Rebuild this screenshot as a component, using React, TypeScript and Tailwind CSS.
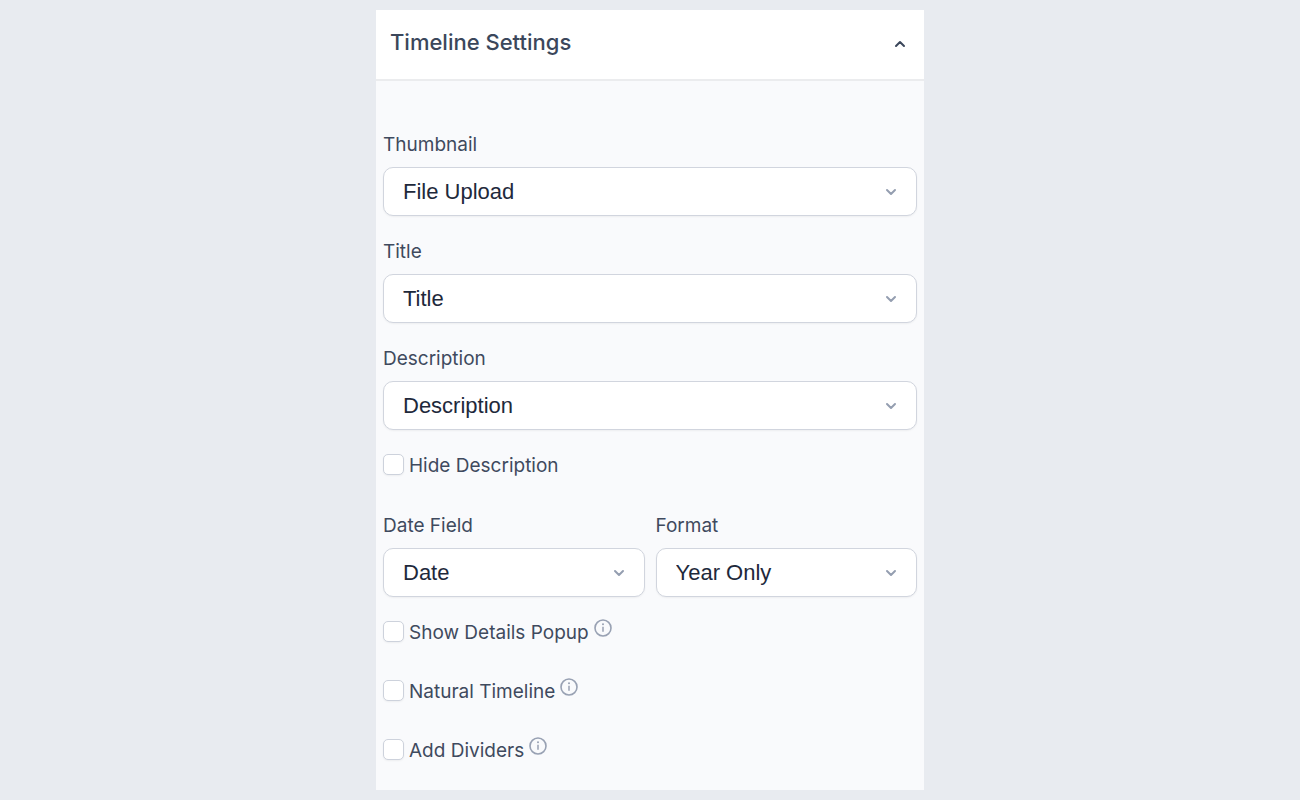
import { useState } from 'react';
import { ChevronDown, ChevronUp } from 'lucide-react';

type SelectFieldProps = {
  id: string;
  label: string;
  options: string[];
};

function SelectField({ id, label, options }: SelectFieldProps) {
  return (
    <div className="flex-1">
      <label htmlFor={id} className="block text-[19px] leading-7 mb-2">
        {label}
      </label>
      <div className="relative">
        <select
          id={id}
          className="block w-full h-[49px] appearance-none rounded-[10px] border border-[#d1d5de] bg-white pl-[19px] pr-12 font-['Liberation_Sans',Arial,sans-serif] text-[22px] text-[#1e293b] shadow-xs"
        >
          {options.map((option) => (
            <option key={option}>{option}</option>
          ))}
        </select>
        <ChevronDown
          className="pointer-events-none absolute right-[18px] top-[17px] h-4 w-4 text-[#949eb0]"
          strokeWidth={3}
        />
      </div>
    </div>
  );
}

function InfoIcon() {
  return (
    <svg viewBox="0 0 18 18" className="ml-[5px] h-[18px] w-[18px] text-[#98a1b3]" fill="none" stroke="currentColor">
      <circle cx="9" cy="9" r="8" strokeWidth="1.6" />
      <path d="M9 7.8v5" strokeWidth="1.5" />
      <circle cx="9" cy="5.3" r="1" fill="currentColor" stroke="none" />
    </svg>
  );
}

type CheckFieldProps = {
  id: string;
  label: string;
  info?: boolean;
};

function CheckField({ id, label, info }: CheckFieldProps) {
  return (
    <div className="flex h-7 items-start">
      <input
        id={id}
        type="checkbox"
        className="mt-[2px] mr-[5px] h-[21px] w-[21px] appearance-none rounded-[5px] border border-[#cdd2dc] bg-white shadow-xs checked:bg-blue-600"
      />
      <label htmlFor={id} className="text-[19px] leading-7">
        {label}
      </label>
      {info && <InfoIcon />}
    </div>
  );
}

export default function App() {
  const [open, setOpen] = useState(true);

  return (
    <main className="min-h-screen bg-[#e8ebf0] py-[10px] font-[Inter,sans-serif] text-[#3f4a5e]">
      <section className="mx-auto w-full max-w-[548px] bg-[#f9fafc]">
        <button
          type="button"
          aria-expanded={open}
          onClick={() => setOpen(!open)}
          className="flex w-full items-center justify-between border-b-2 border-[#ebecee] bg-white pl-[14px] pr-4 pt-4 pb-[21px] text-[#3b475b]"
        >
          <h2 className="text-[22px] leading-8 font-medium">Timeline Settings</h2>
          <ChevronUp className="mt-1 h-4 w-4" strokeWidth={3} />
        </button>

        {open && (
          <form className="px-[7px] pt-[50px] pb-[25px]">
            <div className="flex flex-col gap-[22px]">
              <SelectField id="thumbnail" label="Thumbnail" options={['File Upload', 'None']} />
              <SelectField id="title" label="Title" options={['Title', 'None']} />
              <SelectField id="description" label="Description" options={['Description', 'None']} />
              <CheckField id="hide-description" label="Hide Description" />
            </div>
            <div className="mt-8 mb-[22px] flex gap-[11px]">
              <SelectField id="date-field" label="Date Field" options={['Date', 'None']} />
              <SelectField id="format" label="Format" options={['Year Only', 'Full Date']} />
            </div>
            <div className="flex flex-col gap-[31px]">
              <CheckField id="details-popup" label="Show Details Popup" info />
              <CheckField id="natural-timeline" label="Natural Timeline" info />
              <CheckField id="add-dividers" label="Add Dividers" info />
            </div>
          </form>
        )}
      </section>
    </main>
  );
}
